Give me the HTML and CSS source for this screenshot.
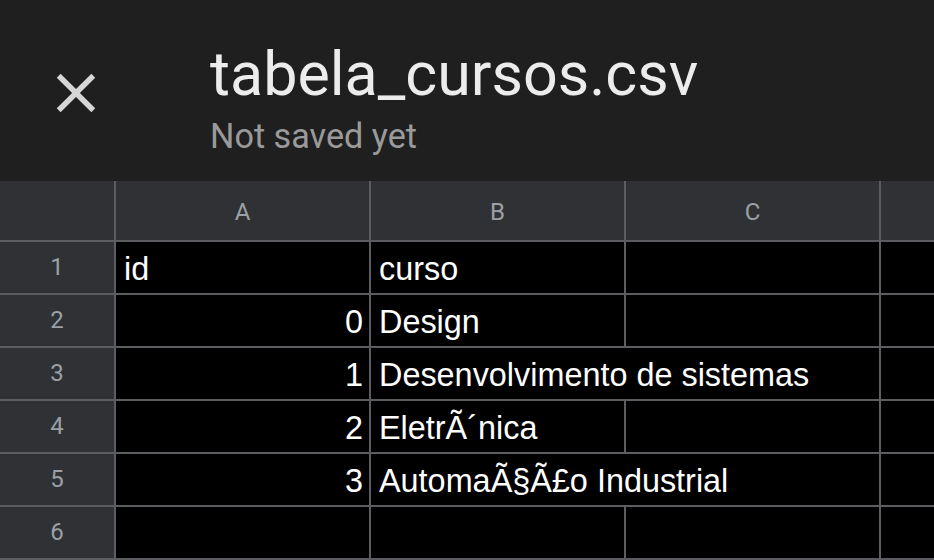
FILE: index.html
```html
<!DOCTYPE html>
<html lang="pt">
<head>
<meta charset="utf-8">
<title>tabela_cursos.csv</title>
<link rel="stylesheet" href="styles.css">
</head>
<body>
<header class="topbar">
  <div class="close">
    <svg class="close-icon" viewBox="0 0 24 24" width="66" height="66" aria-hidden="true">
      <path d="M19 6.41L17.59 5 12 10.59 6.41 5 5 6.41 10.59 12 5 17.59 6.41 19 12 13.41 17.59 19 19 17.59 13.41 12z"/>
    </svg>
  </div>
  <div class="titles">
    <div class="title">tabela_cursos.csv</div>
    <div class="subtitle">Not saved yet</div>
  </div>
</header>
<main class="sheet">
  <div class="corner"></div>
  <div class="colhead">A</div>
  <div class="colhead">B</div>
  <div class="colhead">C</div>
  <div class="colhead"></div>

  <div class="rowhead">1</div>
  <div class="cell">id</div>
  <div class="cell">curso</div>
  <div class="cell"></div>
  <div class="cell"></div>

  <div class="rowhead">2</div>
  <div class="cell num">0</div>
  <div class="cell">Design</div>
  <div class="cell"></div>
  <div class="cell"></div>

  <div class="rowhead">3</div>
  <div class="cell num">1</div>
  <div class="cell span2">Desenvolvimento de sistemas</div>
  <div class="cell"></div>

  <div class="rowhead">4</div>
  <div class="cell num">2</div>
  <div class="cell">EletrÃ´nica</div>
  <div class="cell"></div>
  <div class="cell"></div>

  <div class="rowhead">5</div>
  <div class="cell num">3</div>
  <div class="cell span2">AutomaÃ§Ã£o Industrial</div>
  <div class="cell"></div>

  <div class="rowhead">6</div>
  <div class="cell"></div>
  <div class="cell"></div>
  <div class="cell"></div>
  <div class="cell"></div>
</main>
</body>
</html>
```

FILE: styles.css
```css
html, body {
  margin: 0;
  padding: 0;
}
body {
  width: 934px;
  height: 560px;
  overflow: hidden;
  background: #000;
}
.topbar {
  height: 181px;
  background: #1f1f1f;
  display: flex;
  box-sizing: border-box;
}
.close {
  width: 210px;
  flex: none;
  padding: 60px 0 0 43px;
  box-sizing: border-box;
}
.close-icon {
  display: block;
  fill: #d6d6d6;
}
.titles {
  padding-top: 44px;
  font-family: Roboto, "Noto Sans", sans-serif;
}
.title {
  font-size: 61px;
  line-height: 61px;
  color: #ececec;
  white-space: nowrap;
}
.subtitle {
  margin-top: 14px;
  font-size: 34.2px;
  line-height: 35px;
  color: #9a9a9a;
  white-space: nowrap;
}
.sheet {
  display: grid;
  grid-template-columns: 114px 253px 253px 253px 60px;
  grid-template-rows: 59px repeat(6, 51px);
  gap: 2px;
  background: #5b5d61;
  padding-bottom: 2px;
}
.corner, .colhead, .rowhead {
  background: #303134;
  color: #9aa0a6;
  font-family: Roboto, "Noto Sans", sans-serif;
  font-size: 24px;
  display: flex;
  align-items: center;
  justify-content: center;
}
.colhead {
  padding-top: 2px;
}
.rowhead {
  padding-bottom: 2px;
}
.cell {
  background: #000;
  color: #fff;
  font-family: "Liberation Sans", Arial, sans-serif;
  font-size: 32.4px;
  line-height: 32px;
  padding: 11px 8px 0 8px;
  box-sizing: border-box;
  white-space: nowrap;
  overflow: visible;
}
.cell.num {
  text-align: right;
  padding-right: 6px;
}
.span2 {
  grid-column: span 2;
}
```
